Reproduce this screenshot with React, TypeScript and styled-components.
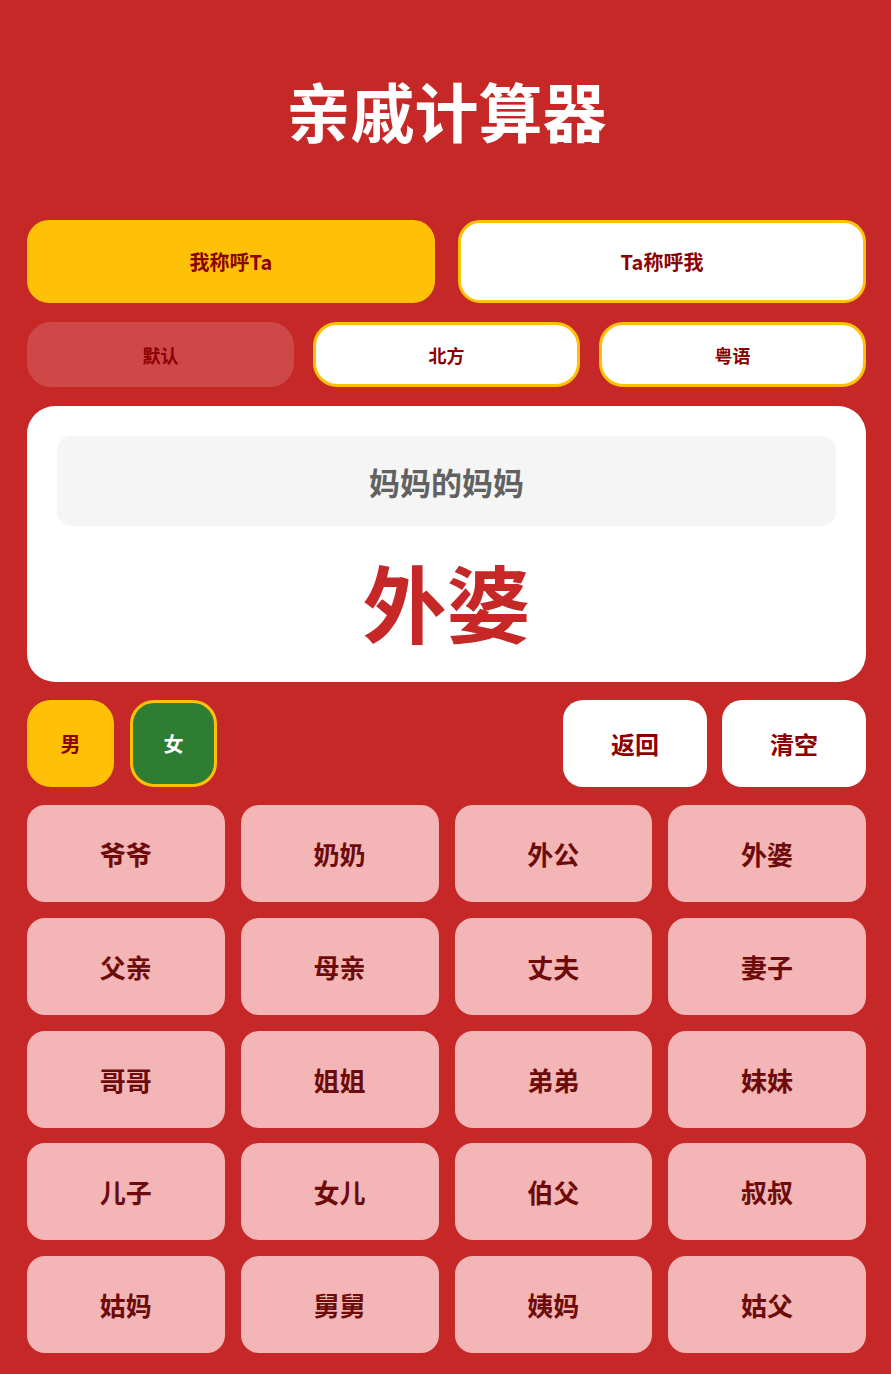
import { FC, useState } from "react";
import styled, { createGlobalStyle } from "styled-components";

const red = "#c62828";
const yellow = "#ffc107";
const darkRed = "#8b0000";

const GlobalStyle = createGlobalStyle`
    html, body {
        margin: 0;
        padding: 0;
        background-color: ${red};
    }
    * {
        box-sizing: border-box;
    }
    body {
        font-family: "Noto Sans CJK SC", "Noto Sans", sans-serif;
    }
`;

const relatives = [
    "爷爷", "奶奶", "外公", "外婆",
    "父亲", "母亲", "丈夫", "妻子",
    "哥哥", "姐姐", "弟弟", "妹妹",
    "儿子", "女儿", "伯父", "叔叔",
    "姑妈", "舅舅", "姨妈", "姑父",
];

const App: FC = () => {
    const [direction, setDirection] = useState(0);
    const [dialect, setDialect] = useState(0);
    const [gender, setGender] = useState<"male" | "female">("male");

    return (
        <Page>
            <GlobalStyle />
            <Title>亲戚计算器</Title>

            <ModeRow>
                <ModeButton active={direction === 0} onClick={() => setDirection(0)}>我称呼Ta</ModeButton>
                <ModeButton active={direction === 1} onClick={() => setDirection(1)}>Ta称呼我</ModeButton>
            </ModeRow>

            <DialectRow>
                {["默认", "北方", "粤语"].map((d, i) => (
                    <DialectButton key={d} active={dialect === i} onClick={() => setDialect(i)}>
                        {d}
                    </DialectButton>
                ))}
            </DialectRow>

            <Display>
                <Expression>妈妈的妈妈</Expression>
                <Result>外婆</Result>
            </Display>

            <ControlRow>
                <GenderGroup>
                    <GenderButton variant="male" onClick={() => setGender("male")}>男</GenderButton>
                    <GenderButton variant="female" onClick={() => setGender("female")}>女</GenderButton>
                </GenderGroup>
                <ActionGroup>
                    <ActionButton>返回</ActionButton>
                    <ActionButton>清空</ActionButton>
                </ActionGroup>
            </ControlRow>

            <Keypad>
                {relatives.map((r) => (
                    <Key key={r}>{r}</Key>
                ))}
            </Keypad>
        </Page>
    );
};

export default App;

const Page = styled.main`
    width: 100%;
    min-height: 100vh;
    padding: 0 25px 22px 27px;
    display: flex;
    flex-direction: column;
    background-color: ${red};
`;

const Title = styled.h1`
    margin: 70px 0 72px;
    font-size: 64px;
    line-height: 78px;
    font-weight: 700;
    color: #ffffff;
    text-align: center;
`;

const ModeRow = styled.div`
    display: grid;
    grid-template-columns: 1fr 1fr;
    gap: 23px;
`;

const ModeButton = styled.button<{ active: boolean }>`
    height: 83px;
    border-radius: 22px;
    border: 3px solid ${yellow};
    background-color: ${(p) => (p.active ? yellow : "#ffffff")};
    color: ${darkRed};
    font-family: inherit;
    font-size: 20px;
    font-weight: 700;
    cursor: pointer;
`;

const DialectRow = styled.div`
    margin-top: 19px;
    display: grid;
    grid-template-columns: repeat(3, 1fr);
    gap: 19px;
`;

const DialectButton = styled.button<{ active: boolean }>`
    height: 65px;
    border-radius: 24px;
    border: 3px solid ${(p) => (p.active ? "transparent" : yellow)};
    background-color: ${(p) => (p.active ? "rgba(255, 255, 255, 0.15)" : "#ffffff")};
    color: ${darkRed};
    font-family: inherit;
    font-size: 18px;
    font-weight: 700;
    cursor: pointer;
`;

const Display = styled.section`
    margin-top: 19px;
    padding: 30px 30px 30px;
    border-radius: 28px;
    background-color: #ffffff;
    display: flex;
    flex-direction: column;
    align-items: stretch;
`;

const Expression = styled.div`
    height: 90px;
    border-radius: 14px;
    background-color: #f5f5f5;
    display: flex;
    justify-content: center;
    align-items: center;
    color: #616161;
    font-size: 31px;
    font-weight: 700;
`;

const Result = styled.div`
    margin-top: 24px;
    text-align: center;
    color: ${red};
    font-size: 84px;
    line-height: 102px;
    font-weight: 700;
`;

const ControlRow = styled.div`
    margin-top: 18px;
    display: flex;
    justify-content: space-between;
    align-items: center;
`;

const GenderGroup = styled.div`
    display: flex;
    gap: 16px;
`;

const GenderButton = styled.button<{ variant: "male" | "female" }>`
    width: 87px;
    height: 87px;
    border-radius: 24px;
    border: 3px solid ${yellow};
    background-color: ${(p) => (p.variant === "male" ? yellow : "#2e7d32")};
    color: ${(p) => (p.variant === "male" ? darkRed : "#ffffff")};
    font-family: inherit;
    font-size: 20px;
    font-weight: 700;
    cursor: pointer;
`;

const ActionGroup = styled.div`
    display: flex;
    gap: 15px;
`;

const ActionButton = styled.button`
    width: 144px;
    height: 87px;
    border-radius: 20px;
    border: none;
    background-color: #ffffff;
    color: ${darkRed};
    font-family: inherit;
    font-size: 24px;
    font-weight: 700;
    cursor: pointer;
`;

const Keypad = styled.div`
    margin-top: 18px;
    display: grid;
    grid-template-columns: repeat(4, 1fr);
    grid-auto-rows: 97px;
    gap: 15.75px 16px;
`;

const Key = styled.button`
    border-radius: 18px;
    border: none;
    background-color: #f3b5b5;
    color: #6d0b0b;
    font-family: inherit;
    font-size: 26px;
    font-weight: 700;
    cursor: pointer;
`;
